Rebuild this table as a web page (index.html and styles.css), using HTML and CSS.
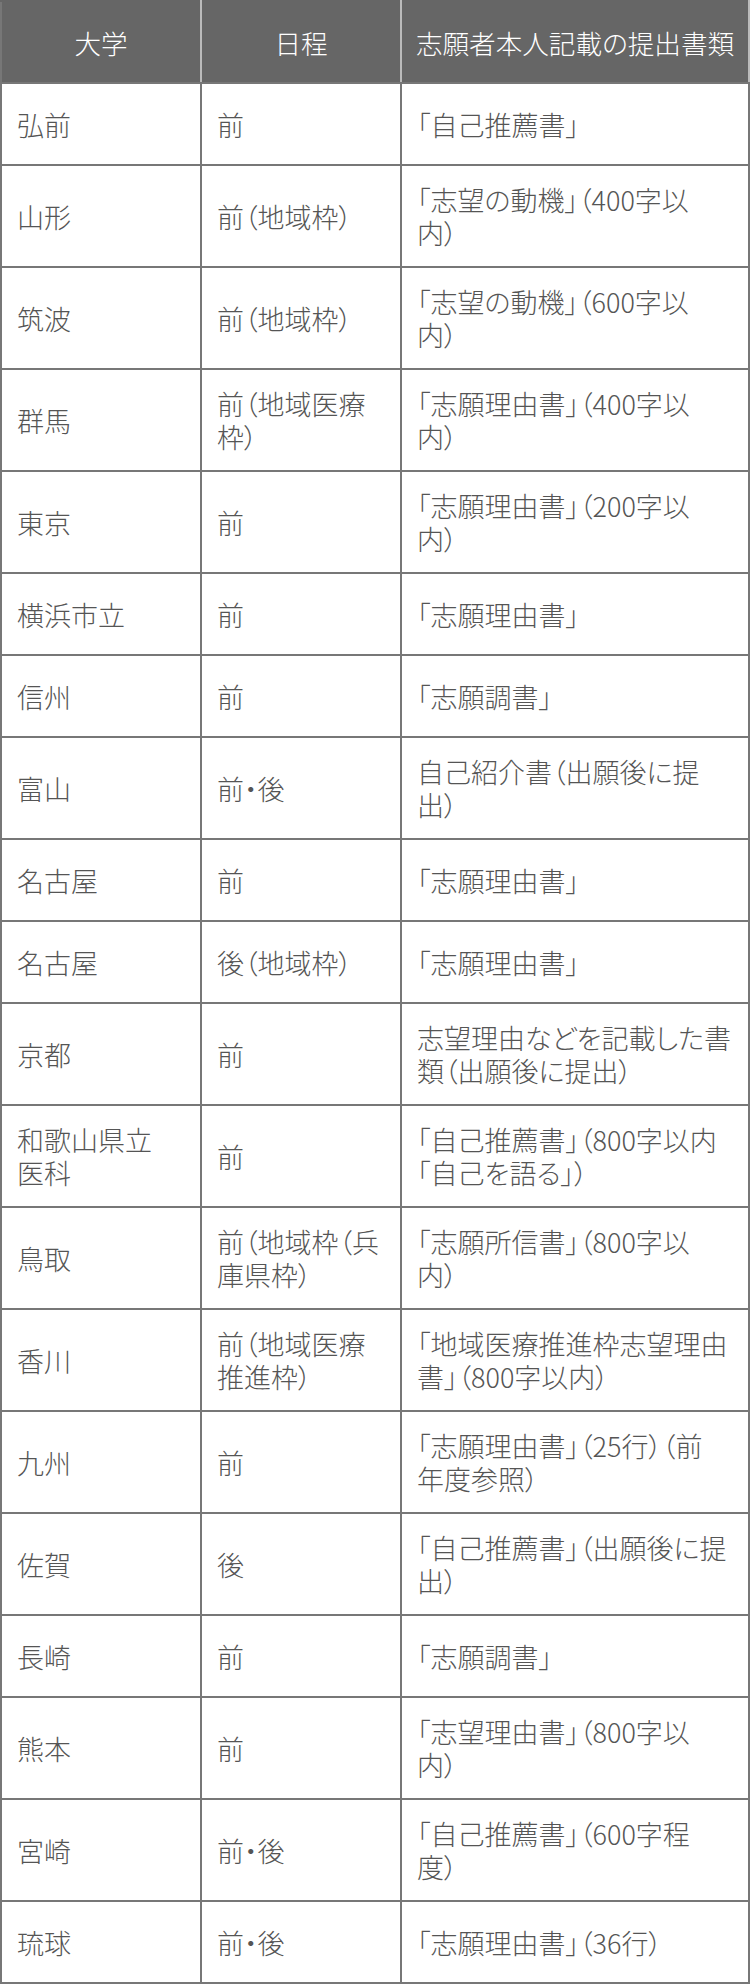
FILE: index.html
```html
<!DOCTYPE html>
<html lang="ja">
<head>
<meta charset="utf-8">
<title>志願者本人記載の提出書類</title>
<link rel="stylesheet" href="styles.css">
</head>
<body>
<table class="docs">
  <colgroup>
    <col class="col-univ">
    <col class="col-sched">
    <col class="col-doc">
  </colgroup>
  <thead>
    <tr>
      <th>大学</th>
      <th>日程</th>
      <th>志願者本人記載の提出書類</th>
    </tr>
  </thead>
  <tbody>
    <tr><td>弘前</td><td>前</td><td>「自己推薦書」</td></tr>
    <tr><td>山形</td><td>前（地域枠）</td><td>「志望の動機」（400字以<br>内）</td></tr>
    <tr><td>筑波</td><td>前（地域枠）</td><td>「志望の動機」（600字以<br>内）</td></tr>
    <tr><td>群馬</td><td>前（地域医療<br>枠）</td><td>「志願理由書」（400字以<br>内）</td></tr>
    <tr><td>東京</td><td>前</td><td>「志願理由書」（200字以<br>内）</td></tr>
    <tr><td>横浜市立</td><td>前</td><td>「志願理由書」</td></tr>
    <tr><td>信州</td><td>前</td><td>「志願調書」</td></tr>
    <tr><td>富山</td><td>前・後</td><td>自己紹介書（出願後に提<br>出）</td></tr>
    <tr><td>名古屋</td><td>前</td><td>「志願理由書」</td></tr>
    <tr><td>名古屋</td><td>後（地域枠）</td><td>「志願理由書」</td></tr>
    <tr><td>京都</td><td>前</td><td>志望理由などを記載した書<br>類（出願後に提出）</td></tr>
    <tr><td>和歌山県立<br>医科</td><td>前</td><td>「自己推薦書」（800字以内<br>「自己を語る」）</td></tr>
    <tr><td>鳥取</td><td>前（地域枠（兵<br>庫県枠）</td><td>「志願所信書」（800字以<br>内）</td></tr>
    <tr><td>香川</td><td>前（地域医療<br>推進枠）</td><td>「地域医療推進枠志望理由<br>書」（800字以内）</td></tr>
    <tr><td>九州</td><td>前</td><td>「志願理由書」（25行）（前<br>年度参照）</td></tr>
    <tr><td>佐賀</td><td>後</td><td>「自己推薦書」（出願後に提<br>出）</td></tr>
    <tr><td>長崎</td><td>前</td><td>「志願調書」</td></tr>
    <tr><td>熊本</td><td>前</td><td>「志望理由書」（800字以<br>内）</td></tr>
    <tr><td>宮崎</td><td>前・後</td><td>「自己推薦書」（600字程<br>度）</td></tr>
    <tr><td>琉球</td><td>前・後</td><td>「志願理由書」（36行）</td></tr>
  </tbody>
</table>
</body>
</html>
```

FILE: styles.css
```css
html, body {
  margin: 0;
  padding: 0;
  background: #fff;
}

body {
  font-family: "Noto Sans CJK JP", "Noto Sans", sans-serif;
  color: #555;
}

.docs {
  width: 748px;
  border-collapse: collapse;
  table-layout: fixed;
  font-feature-settings: "palt";
}

.col-univ { width: 200px; }
.col-sched { width: 200px; }
.col-doc { width: 348px; }

.docs th,
.docs td {
  box-sizing: border-box;
  border: 2px solid #777;
  padding: 17px 8px 17px 15px;
  line-height: 33px;
  vertical-align: middle;
  text-align: left;
  font-weight: 300;
}

.docs tr {
  height: 82px;
}

.docs th {
  background: #666;
  color: #fff;
  font-size: 26.6px;
  text-align: center;
  padding-left: 8px;
  border-left-color: #bbb;
  border-right-color: #bbb;
  border-top-color: #666;
}

.docs th:first-child { border-left-color: #777; }

.docs td {
  font-size: 27px;
}
```
